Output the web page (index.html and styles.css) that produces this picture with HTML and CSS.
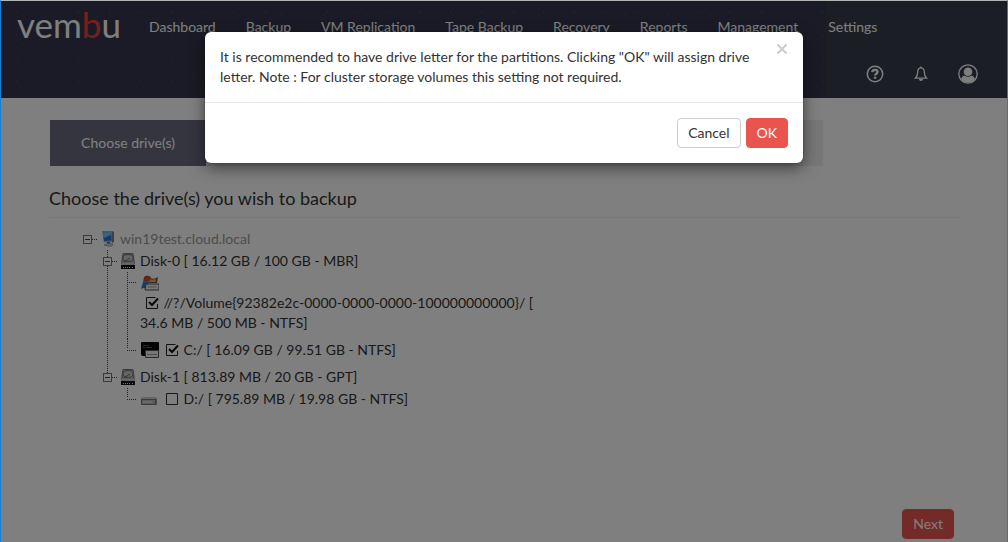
FILE: index.html
```html
<!DOCTYPE html>
<html lang="en">
<head>
	<meta charset="utf-8">
	<title>Vembu - Choose drive(s)</title>
	<link rel="stylesheet" href="styles.css">
</head>
<body>
<div class="app">
	<header class="header">
		<div class="topbar">
			<a class="logo" href="#">vem<span>b</span>u</a>
			<nav class="nav">
				<a href="#">Dashboard</a>
				<a href="#">Backup</a>
				<a href="#">VM Replication</a>
				<a href="#">Tape Backup</a>
				<a href="#">Recovery</a>
				<a href="#">Reports</a>
				<a href="#">Management</a>
				<a href="#">Settings</a>
			</nav>
		</div>
		<div class="tools">
			<button type="button" aria-label="Help">
				<svg width="18" height="18" viewBox="0 0 18 18" fill="none" stroke="currentColor"><circle cx="9" cy="9" r="7.7" stroke-width="1.5"/><path d="M6.300 7.100C6.400 5.500 7.500 4.900 9 4.900s2.600.8 2.600 2.100c0 1.800-2.500 1.700-2.500 3.600" stroke-width="2.200"/><path d="M9.100 11.700v2.100" stroke-width="2.500"/></svg>
			</button>
			<button type="button" aria-label="Notifications">
				<svg width="14" height="16" viewBox="0 0 14 16"><path d="M7 1.800C4.600 1.800 3.700 3.700 3.700 6c0 3-.8 4.800-2.300 6.200h11.200C11.100 10.800 10.300 9 10.300 6c0-2.300-.9-4.200-3.300-4.200z" fill="none" stroke="currentColor" stroke-width="1.300"/><path d="M6.300.6h1.400v1.500H6.300zM5 13h4c0 1.200-.8 2-2 2s-2-.8-2-2z" fill="currentColor"/></svg>
			</button>
			<button type="button" aria-label="Account">
				<svg width="20" height="20" viewBox="0 0 20 20"><circle cx="10" cy="10" r="9.200" fill="none" stroke="currentColor" stroke-width="1.300"/><circle cx="10" cy="7.800" r="4.300" fill="currentColor"/><path d="M3.200 15.200c.3-2.300 1.500-3.300 3.400-3.700 1.900 1.700 4.900 1.700 6.800 0 1.900.4 3.100 1.400 3.400 3.700-3.200 4.500-10.400 4.500-13.600 0z" fill="currentColor"/></svg>
			</button>
		</div>
	</header>

	<main class="content">
		<ol class="steps">
			<li class="active">Choose drive(s)</li>
			<li></li>
			<li></li>
			<li></li>
			<li></li>
		</ol>
		<h1>Choose the drive(s) you wish to backup</h1>

		<ul class="tree">
			<li>
				<div class="row">
					<button type="button" class="toggle" aria-label="Collapse"></button><i class="dots"></i>
					<svg class="icon" width="14" height="16" viewBox="0 0 14 16"><path d="M1 0h10l1 11-9 .5z" fill="#9fb4c8"/><path d="M11 0l2 1v10l-2 1z" fill="#6f8598"/><path d="M2 1.500l8-.5.500 8.500L3 10z" fill="#1f78d6"/><path d="M2 1.500l8-.5v3L2.500 7z" fill="#7cc4f8"/><path d="M6 11h3v2H6z" fill="#5f6c78"/><path d="M3 14q4-3 9-1l-1 2q-4 1-8-1z" fill="#c4ccd4" stroke="#6f7c88" stroke-width=".5"/></svg>
					<span class="host">win19test.cloud.local</span>
				</div>
				<ul>
					<li>
						<div class="row">
							<button type="button" class="toggle" aria-label="Collapse"></button><i class="dots"></i>
							<svg class="icon" width="14" height="16" viewBox="0 0 14 16"><path d="M2 .5h10L13.500 11H.5z" fill="#aaa" stroke="#777"/><ellipse cx="7" cy="5" rx="5" ry="3.500" fill="#ccc" stroke="#777"/><path d="M3 9l6-4" stroke="#666"/><path d="M.5 9.500h13v2H.5z" fill="#ccc"/><path d="M0 12h14v4H0z" fill="#111"/><path d="M2 14.500h1m1 0h1m1 0h1m1 0h1m2 0h1" stroke="#eee"/></svg>
							<span>Disk-0 [ 16.12 GB / 100 GB - MBR]</span>
						</div>
						<ul>
							<li class="volume">
								<div class="row leaf">
									<i class="dots"></i>
									<div class="wrap">
										<svg class="icon" width="18" height="16" viewBox="0 0 18 16"><path d="M3 2q3-3 7 0L8.500 7Q5 5 2 7z" fill="#c94b32"/><path d="M2 7q3-2 6 0l-2 7q-3-2-6 0z" fill="#3d78bd"/><path d="M9 3q4 2 8-1l-1 6H8z" fill="#6b5340"/><path d="M9 4q4 2 5-1l1 4H8z" fill="#e3b161"/><path d="M5 9h13v6H4z" fill="#eee" stroke="#555"/><path d="M6.500 12h9" stroke="#999"/></svg>
										<label><input type="checkbox" checked> //?/Volume{92382e2c-0000-0000-0000-100000000000}/ [ 34.6 MB / 500 MB - NTFS]</label>
									</div>
								</div>
							</li>
							<li class="drive">
								<div class="row leaf">
									<i class="dots"></i>
									<svg class="icon" width="18" height="16" viewBox="0 0 18 16"><path d="M1 0h16q1 0 1 1v13H2q-2 0-2-2V1q0-1 1-1z" fill="#080808"/><path d="M2 3.500h3m1 0h2M2 5.500h2m1 0h6" stroke="#555"/><path d="M4.500 8.500h13v7h-13z" fill="#eee" stroke="#555"/><path d="M6 12.500h10" stroke="#999"/></svg>
									<label><input type="checkbox" checked> C:/ [ 16.09 GB / 99.51 GB - NTFS]</label>
								</div>
							</li>
						</ul>
					</li>
					<li>
						<div class="row">
							<button type="button" class="toggle" aria-label="Collapse"></button><i class="dots"></i>
							<svg class="icon" width="14" height="16" viewBox="0 0 14 16"><path d="M2 .5h10L13.500 11H.5z" fill="#aaa" stroke="#777"/><ellipse cx="7" cy="5" rx="5" ry="3.500" fill="#ccc" stroke="#777"/><path d="M3 9l6-4" stroke="#666"/><path d="M.5 9.500h13v2H.5z" fill="#ccc"/><path d="M0 12h14v4H0z" fill="#111"/><path d="M2 14.500h1m1 0h1m1 0h1m1 0h1m2 0h1" stroke="#eee"/></svg>
							<span>Disk-1 [ 813.89 MB / 20 GB - GPT]</span>
						</div>
						<ul>
							<li>
								<div class="row leaf">
									<i class="dots"></i>
									<svg class="icon" width="18" height="16" viewBox="0 0 18 16"><path d="M1 6h13l2 2v6H0V8z" fill="#999"/><path d="M1 6h13l1 2H0z" fill="#ccc"/><path d="M.5 8.500h14v5H.5z" fill="#bbb" stroke="#777"/><path d="M2 11h9" stroke="#eee"/></svg>
									<label><input type="checkbox"> D:/ [ 795.89 MB / 19.98 GB - NTFS]</label>
								</div>
							</li>
						</ul>
					</li>
				</ul>
			</li>
		</ul>
	</main>

	<footer class="actions">
		<button type="button" class="btn btn-primary">Next</button>
	</footer>

	<div class="backdrop">
		<div class="modal" role="dialog" aria-modal="true" aria-describedby="message">
			<div class="modal-body">
				<p id="message">It is recommended to have drive letter for the partitions. Clicking "OK" will assign drive letter. Note : For cluster storage volumes this setting not required.</p>
				<button type="button" class="close" aria-label="Close">
					<svg width="12" height="12" viewBox="0 0 12 12"><path d="M1.500 1.500l9 9m0-9l-9 9" stroke="currentColor" stroke-width="2"/></svg>
				</button>
			</div>
			<div class="modal-footer">
				<button type="button" class="btn">Cancel</button>
				<button type="button" class="btn btn-primary">OK</button>
			</div>
		</div>
	</div>
</div>
</body>
</html>
```
FILE: styles.css
```css
* {
  box-sizing: border-box;
}

body {
  margin: 0;
  border: 1px solid #1c7fd6;
  border-top-color: #b0b6b6;
  border-bottom: 0;
  font-family: Lato, "Open Sans", sans-serif;
  font-size: 14px;
  line-height: 20px;
  color: #333;
  background: #fff;
}

button {
  font: inherit;
  cursor: pointer;
}

ul, ol {
  margin: 0;
  padding: 0;
  list-style: none;
}

.app {
  position: relative;
  display: flex;
  flex-direction: column;
  min-height: calc(100vh - 1px);
}

/* || header */

.header {
  padding: 7px 29px 14px 16px;
  color: #fff;
  background-color: #34364c;
  background-image:
    linear-gradient(90deg, transparent 82%, #363e4a 82%),
    radial-gradient(circle, #404258 1px, transparent 1px),
    radial-gradient(circle, #3e4056 1px, transparent 1px);
  background-size: auto, 31px 23px, 43px 29px;
}

.topbar {
  display: flex;
  align-items: center;
  height: 38px;
}

.logo {
  width: 117px;
  padding-bottom: 6px;
  font-size: 35px;
  line-height: 32px;
  color: #fff;
  text-decoration: none;
}

.logo span {
  color: #e8413c;
}

.nav {
  display: flex;
  gap: 30px;
  margin-left: 15px;
}

.nav a {
  color: #fff;
  text-decoration: none;
  white-space: nowrap;
}

.tools {
  display: flex;
  justify-content: flex-end;
  align-items: center;
  gap: 30px;
  margin-top: 18px;
}

.tools button {
  display: flex;
  padding: 0;
  border: 0;
  color: inherit;
  background: none;
}

/* || content */

.content {
  flex: 1;
  padding: 22px 47px 0 48px;
}

.steps {
  display: flex;
  width: 85%;
  height: 46px;
  padding-left: 1px;
}

.steps li {
  flex: 1;
  line-height: 46px;
  text-align: center;
  background: #eee;
}

.steps .active {
  flex: 0 0 156px;
  color: #fff;
  background: #6b6b80;
}

h1 {
  margin: 19px 0 0;
  padding-bottom: 6px;
  border-bottom: 1px solid #eee;
  font-size: 18px;
  font-weight: 400;
  line-height: 26px;
}

/* || drive tree */

.tree {
  padding: 10px 0 0 34px;
}

.tree li ul {
  padding-left: 20px;
}

.tree li li {
  background: repeating-linear-gradient(#444 0 1px, transparent 1px 2px) 4px 0 / 1px 100% no-repeat;
}

.tree li li:last-child {
  background-size: 1px 10px;
}

.row {
  display: flex;
  align-items: center;
  padding: 1px 0;
}

.row .icon {
  flex: none;
  margin: 0 5px 0 4px;
}

.dots {
  flex: none;
  width: 5px;
  height: 1px;
  background: repeating-linear-gradient(90deg, #444 0 1px, transparent 1px 2px);
}

.leaf .dots {
  width: 10px;
  margin-left: 4px;
}

.toggle {
  flex: none;
  width: 9px;
  height: 9px;
  padding: 0;
  border: 1px solid #777;
  background: linear-gradient(#2a3f8f, #2a3f8f) center / 5px 1px no-repeat #fff;
}

.host {
  color: #999;
}

.volume .row {
  align-items: flex-start;
  padding-bottom: 6px;
}

.volume .dots {
  margin-top: 9px;
}

.row.leaf .wrap .icon {
  display: block;
  margin: 2px 0 2px 1px;
}

.wrap {
  max-width: 400px;
  margin-left: 3px;
}

.drive {
  padding-bottom: 5px;
}

input[type="checkbox"] {
  appearance: none;
  width: 14px;
  height: 14px;
  margin: 0 1px 0 1px;
  vertical-align: -2px;
  background: url("data:image/svg+xml,%3Csvg xmlns='http://www.w3.org/2000/svg' viewBox='0 0 14 14'%3E%3Cpath d='M1.500 1.500h11v11h-11z' fill='none' stroke='%23333'/%3E%3C/svg%3E");
}

input[type="checkbox"]:checked {
  background: url("data:image/svg+xml,%3Csvg xmlns='http://www.w3.org/2000/svg' viewBox='0 0 14 14'%3E%3Cpath d='M12.500 8v4.500h-11v-11h9' fill='none' stroke='%23222'/%3E%3Cpath d='M4 6l3 3 6-6.500' fill='none' stroke='%23111' stroke-width='2'/%3E%3C/svg%3E");
}

.volume input[type="checkbox"] {
  margin-left: 5px;
}

/* || buttons */

.btn {
  height: 30px;
  padding: 0 10px;
  border: 1px solid #ccc;
  border-radius: 4px;
  color: #333;
  background: #fff;
}

.btn-primary {
  border-color: #e9544f;
  color: #fff;
  background: #e9544f;
}

.actions {
  padding: 0 53px 3px;
  text-align: right;
}

/* || dialog */

.backdrop {
  position: absolute;
  inset: 0;
  padding-top: 31px;
  background: rgba(0, 0, 0, .5);
}

.modal {
  max-width: 598px;
  margin: 0 auto;
  border-radius: 6px;
  background: #fff;
  box-shadow: 0 5px 15px rgba(0, 0, 0, .5), 0 0 1px #000;
}

.modal-body {
  display: flex;
  align-items: flex-start;
  justify-content: space-between;
  padding: 11px 15px 15px;
}

.modal-body p {
  max-width: 540px;
  margin: 4px 0 0;
}

.close {
  padding: 0;
  border: 0;
  line-height: 0;
  color: #ccc;
  background: none;
}

.modal-footer {
  display: flex;
  justify-content: flex-end;
  gap: 5px;
  padding: 15px;
  border-top: 1px solid #e5e5e5;
}
```
